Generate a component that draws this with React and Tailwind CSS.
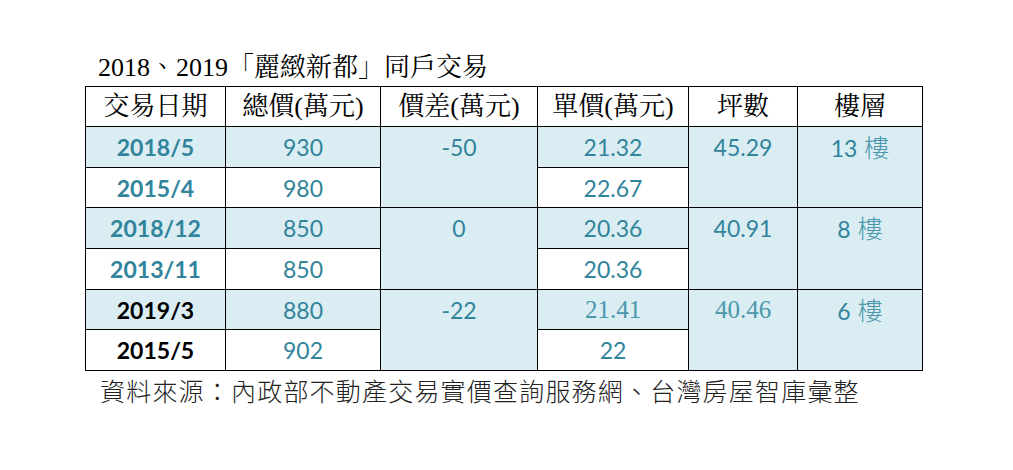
import React from "react";

const serif = { fontFamily: '"Liberation Serif", "Noto Serif CJK TC", "Noto Sans CJK TC", serif' };

function Cell({ children, bg, rowSpan, className = "" }) {
  return (
    <td
      rowSpan={rowSpan}
      className={`border border-black text-center align-top p-0 pt-[5px] ${bg ? "bg-[#daedf3]" : "bg-white"} ${className}`}
    >
      {children}
    </td>
  );
}

const num = "font-['Lato',_'Noto_Sans_CJK_TC',_sans-serif] text-[23px] leading-[30px] text-[#31849b]";
const dateTeal = "font-['Lato',_'Noto_Sans_CJK_TC',_sans-serif] text-[23px] leading-[30px] font-bold text-[#31849b]";
const dateBlack = "font-['Lato',_'Noto_Sans_CJK_TC',_sans-serif] text-[23px] leading-[30px] font-bold text-black";
const timesNum = "font-['Liberation_Serif',_serif] text-[25px] leading-[30px] text-[#4a97ab]";

function Floor({ n }) {
  return (
    <span className="inline-flex items-baseline">
      <span className="font-['Lato',_sans-serif] text-[23px] text-[#31849b]">{n}</span>
      <span className="ml-[7px] font-['Noto_Sans_CJK_TC',_sans-serif] font-light text-[25px] text-[#4a97ab]">樓</span>
    </span>
  );
}

export default function App() {
  const header = ["交易日期", "總價(萬元)", "價差(萬元)", "單價(萬元)", "坪數", "樓層"];
  return (
    <div className="w-[1013px] h-[470px] bg-white">
      <div className="pl-[85px] pt-[53px]">
        <div className="pl-[13px] text-[26px] leading-[30px] text-black" style={serif}>
          2018、2019「麗緻新都」同戶交易
        </div>
        <table className="mt-[3px] border-collapse table-fixed w-[837px]">
          <colgroup>
            <col className="w-[140px]" />
            <col className="w-[155px]" />
            <col className="w-[157px]" />
            <col className="w-[151px]" />
            <col className="w-[109px]" />
            <col className="w-[125px]" />
          </colgroup>
          <tbody>
            <tr className="h-[40px]">
              {header.map((h) => (
                <td
                  key={h}
                  className="border border-black text-center align-middle p-0 text-[26px] leading-[30px] text-black bg-white"
                  style={serif}
                >
                  {h}
                </td>
              ))}
            </tr>
            <tr className="h-[41px]">
              <Cell bg className={dateTeal}>2018/5</Cell>
              <Cell bg className={num}>930</Cell>
              <Cell bg rowSpan={2} className={num}>-50</Cell>
              <Cell bg className={num}>21.32</Cell>
              <Cell bg rowSpan={2} className={num}>45.29</Cell>
              <Cell bg rowSpan={2} className="leading-[28px]"><Floor n="13" /></Cell>
            </tr>
            <tr className="h-[40px]">
              <Cell className={dateTeal}>2015/4</Cell>
              <Cell className={num}>980</Cell>
              <Cell className={num}>22.67</Cell>
            </tr>
            <tr className="h-[41px]">
              <Cell bg className={dateTeal}>2018/12</Cell>
              <Cell bg className={num}>850</Cell>
              <Cell bg rowSpan={2} className={num}>0</Cell>
              <Cell bg className={num}>20.36</Cell>
              <Cell bg rowSpan={2} className={num}>40.91</Cell>
              <Cell bg rowSpan={2} className="leading-[28px]"><Floor n="8" /></Cell>
            </tr>
            <tr className="h-[41px]">
              <Cell className={dateTeal}>2013/11</Cell>
              <Cell className={num}>850</Cell>
              <Cell className={num}>20.36</Cell>
            </tr>
            <tr className="h-[40px]">
              <Cell bg className={dateBlack}>2019/3</Cell>
              <Cell bg className={num}>880</Cell>
              <Cell bg rowSpan={2} className={num}>-22</Cell>
              <Cell bg className={timesNum}>21.41</Cell>
              <Cell bg rowSpan={2} className={timesNum}>40.46</Cell>
              <Cell bg rowSpan={2} className="leading-[28px]"><Floor n="6" /></Cell>
            </tr>
            <tr className="h-[41px]">
              <Cell className={dateBlack}>2015/5</Cell>
              <Cell className={num}>902</Cell>
              <Cell className={num}>22</Cell>
            </tr>
          </tbody>
        </table>
        <div className="mt-[4px] pl-[15px] font-['Noto_Sans_CJK_TC',_sans-serif] font-light text-[25px] leading-[30px] tracking-[1.2px] text-[#222]">
          資料來源：內政部不動產交易實價查詢服務網、台灣房屋智庫彙整
        </div>
      </div>
    </div>
  );
}
